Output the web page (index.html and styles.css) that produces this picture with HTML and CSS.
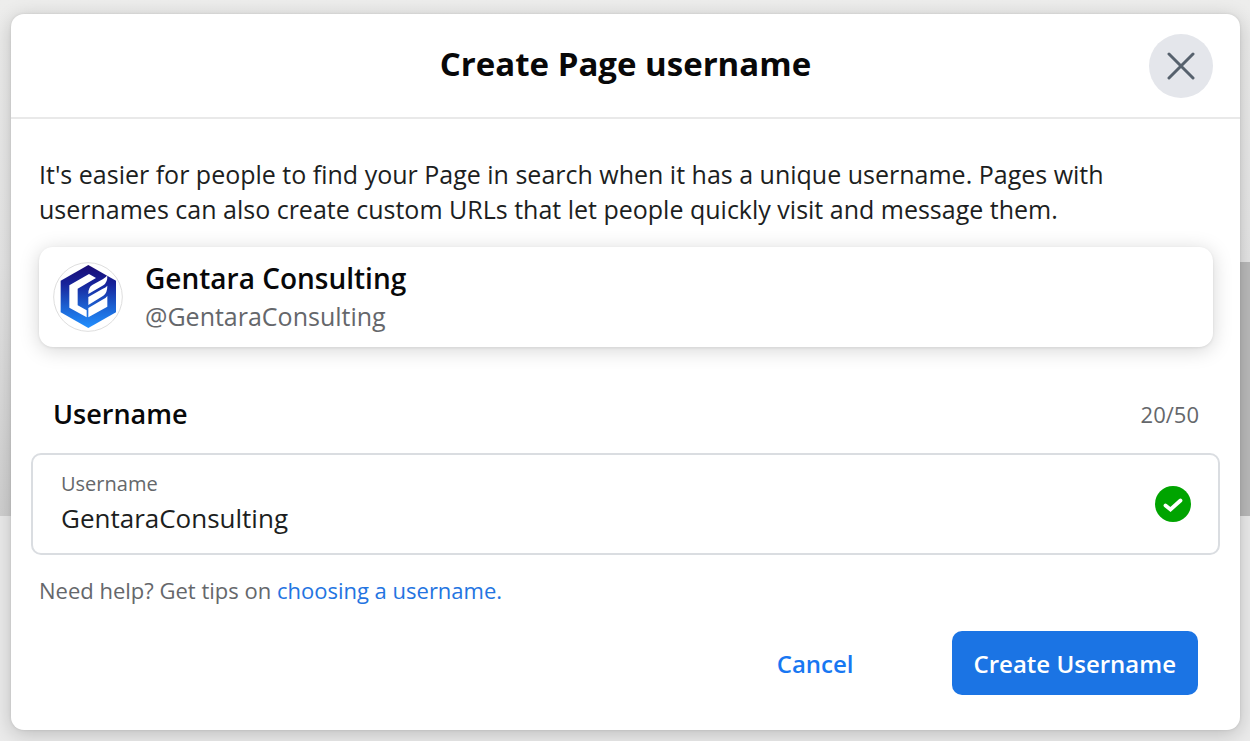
FILE: index.html
```html
<!DOCTYPE html>
<html lang="en">
<head>
<meta charset="utf-8">
<meta name="viewport" content="width=device-width, initial-scale=1">
<title>Create Page username</title>
<link rel="stylesheet" href="styles.css">
</head>
<body>
<main class="dialog" role="dialog" aria-labelledby="dialog-title">
  <header class="dialog-header">
    <h1 class="dialog-title" id="dialog-title">Create Page username</h1>
    <button class="close" type="button" aria-label="Close">
      <svg width="28" height="28" viewBox="0 0 28 28" fill="none" stroke="#56616d" stroke-width="3" stroke-linecap="round"><path d="M2 2 26 26M26 2 2 26"/></svg>
    </button>
  </header>
  <form class="dialog-body">
    <p class="intro">It's easier for people to find your Page in search when it has a unique username. Pages with usernames can also create custom URLs that let people quickly visit and message them.</p>
    <section class="page-card">
      <svg class="avatar" viewBox="39 48 210 210" aria-hidden="true">
        <defs><linearGradient id="hex" x1="0" y1="0" x2="0" y2="1"><stop offset="0" stop-color="#190a72"/><stop offset=".3" stop-color="#17239a"/><stop offset=".65" stop-color="#1c5fd0"/><stop offset="1" stop-color="#2190ff"/></linearGradient></defs>
        <circle cx="144" cy="153" r="103" fill="#fff" stroke="#dedede" stroke-width="3"/>
        <path d="M145 57 228 104V199L145 246 62 199V104Z" fill="url(#hex)"/>
        <path d="M88 118 147 84 168 96 113 128V178L140 193V214L88 185Z" fill="#fff"/>
        <path d="M145 144Q144 124 158 116L188 100Q198 95 202 88 203 110 190 118ZM145 177V153L187 129Q198 124 202 119 202 141 190 149ZM145 214V186L187 161Q198 156 202 150V182Z" fill="#fff"/>
      </svg>
      <div class="page-text">
        <h2 class="page-name">Gentara Consulting</h2>
        <p class="page-handle">@GentaraConsulting</p>
      </div>
    </section>
    <div class="field-heading">
      <h2 class="field-title">Username</h2>
      <span class="counter">20/50</span>
    </div>
    <div class="field">
      <div class="field-text">
        <label class="field-label" for="username">Username</label>
        <input class="field-input" id="username" type="text" value="GentaraConsulting" maxlength="50">
      </div>
      <svg class="valid" width="36" height="36" viewBox="0 0 36 36" aria-hidden="true"><circle cx="18" cy="18" r="18" fill="#00a400"/><path d="M10.500 19.500 15.500 23.500 25.500 14.500" fill="none" stroke="#fff" stroke-width="3.800" stroke-linecap="round" stroke-linejoin="miter"/></svg>
    </div>
    <p class="help">Need help? Get tips on <a class="help-link" href="#">choosing a username.</a></p>
    <div class="actions">
      <button class="button cancel" type="button">Cancel</button>
      <button class="button primary" type="submit">Create Username</button>
    </div>
  </form>
</main>
</body>
</html>
```
FILE: styles.css
```css
* { box-sizing: border-box; }

body {
  margin: 0;
  min-height: 100vh;
  padding: 14px 10px 11px 11px;
  font-family: "Open Sans", "Noto Sans", sans-serif;
  color: #1c1e21;
  background:
    linear-gradient(#bababa, #bababa) right 262px / 50% 254px no-repeat,
    linear-gradient(#ededec, #e6e6e6 262px, #d0d0d0 516px) 0 0 / 100% 516px no-repeat,
    #ebebeb;
}

h1, h2, p { margin: 0; }
button, input { font: inherit; }

.dialog {
  background: #fff;
  border-radius: 13px;
  box-shadow: 0 4px 20px rgba(0, 0, 0, .2), 0 0 3px rgba(0, 0, 0, .1);
}

.dialog-header {
  display: grid;
  grid-template-columns: 64px 1fr 64px;
  align-items: center;
  height: 105px;
  padding: 0 27px;
  border-bottom: 2px solid #e9e9e9;
}

.dialog-title {
  grid-column: 2;
  padding-bottom: 4px;
  text-align: center;
  font-size: 33px;
  line-height: 44px;
  font-weight: 700;
  color: #080809;
}

.close {
  display: grid;
  place-items: center;
  width: 64px;
  height: 64px;
  padding: 0;
  border: 0;
  border-radius: 50%;
  background: #e4e6eb;
}

.dialog-body { padding: 38px 20px 35px; }

.intro {
  padding: 0 8px;
  font-size: 25px;
  line-height: 35px;
}

.page-card {
  display: flex;
  align-items: center;
  gap: 22px;
  height: 100px;
  margin: 20px 7px 0 8px;
  padding: 0 14px;
  border-radius: 14px;
  box-shadow: 0 3px 20px rgba(0, 0, 0, .17), 0 1px 3px rgba(0, 0, 0, .08);
}

.avatar { width: 70px; height: 70px; }

.page-name {
  font-size: 28px;
  line-height: 38px;
  font-weight: 600;
  color: #080809;
}

.page-handle {
  font-size: 25px;
  line-height: 38px;
  color: #65676b;
}

.field-heading {
  display: flex;
  align-items: center;
  justify-content: space-between;
  margin-top: 48px;
  padding: 0 21px 0 22px;
}

.field-title {
  font-size: 27px;
  line-height: 38px;
  font-weight: 600;
  color: #080809;
}

.counter {
  font-size: 22px;
  line-height: 38px;
  color: #65676b;
}

.field {
  display: flex;
  align-items: center;
  height: 102px;
  margin-top: 20px;
  padding: 0 27px 0 28px;
  border: 2px solid #dadde1;
  border-radius: 10px;
}

.field-text {
  display: flex;
  flex: 1;
  flex-direction: column;
}

.field-label {
  font-size: 20px;
  line-height: 28px;
  color: #65676b;
}

.field-input {
  width: 100%;
  height: 40px;
  padding: 0;
  border: 0;
  outline: 0;
  background: transparent;
  font-size: 26px;
  color: #1c1e21;
}

.help {
  margin-top: 19px;
  padding: 0 8px;
  font-size: 22px;
  line-height: 32px;
  color: #65676b;
}

.help-link {
  color: #2374e1;
  text-decoration: none;
}

.actions {
  display: flex;
  justify-content: flex-end;
  gap: 76px;
  margin: 25px 22px 0 0;
}

.button {
  height: 64px;
  padding: 0 22px;
  border: 0;
  border-radius: 10px;
  font-size: 24px;
  font-weight: 600;
  white-space: nowrap;
}

.cancel {
  color: #1877f2;
  background: transparent;
}

.primary {
  color: #fff;
  background: #1b74e4;
}
```
